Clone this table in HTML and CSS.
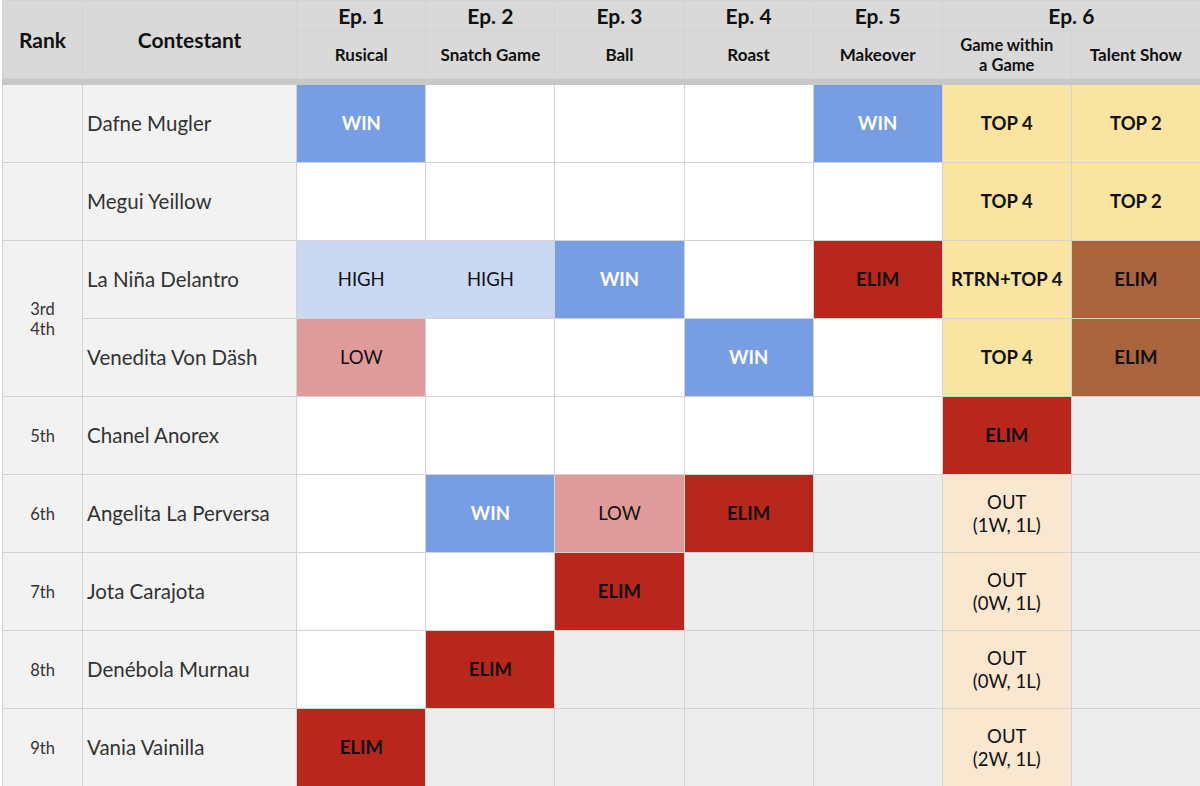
FILE: index.html
```html
<!DOCTYPE html>
<html>
<head>
<meta charset="utf-8">
<link rel="stylesheet" href="styles.css">
</head>
<body>
<table class="prog">
  <colgroup>
    <col class="c-rank"><col class="c-name">
    <col class="c-ep"><col class="c-ep"><col class="c-ep"><col class="c-ep"><col class="c-ep"><col class="c-ep"><col class="c-ep">
  </colgroup>
  <thead>
    <tr class="h1">
      <th rowspan="2" class="big">Rank</th>
      <th rowspan="2" class="big">Contestant</th>
      <th class="big">Ep. 1</th>
      <th class="big">Ep. 2</th>
      <th class="big">Ep. 3</th>
      <th class="big">Ep. 4</th>
      <th class="big">Ep. 5</th>
      <th colspan="2" class="big">Ep. 6</th>
    </tr>
    <tr class="h2">
      <th>Rusical</th>
      <th>Snatch Game</th>
      <th>Ball</th>
      <th>Roast</th>
      <th>Makeover</th>
      <th class="two">Game within<br>a Game</th>
      <th>Talent Show</th>
    </tr>
    <tr class="sep"><td colspan="9"></td></tr>
  </thead>
  <tbody>
    <tr>
      <td class="rank"></td>
      <td class="name">Dafne Mugler</td>
      <td class="win">WIN</td>
      <td class="safe"></td>
      <td class="safe"></td>
      <td class="safe"></td>
      <td class="win">WIN</td>
      <td class="top">TOP 4</td>
      <td class="top">TOP 2</td>
    </tr>
    <tr>
      <td class="rank"></td>
      <td class="name">Megui Yeillow</td>
      <td class="safe"></td>
      <td class="safe"></td>
      <td class="safe"></td>
      <td class="safe"></td>
      <td class="safe"></td>
      <td class="top">TOP 4</td>
      <td class="top">TOP 2</td>
    </tr>
    <tr>
      <td class="rank" rowspan="2">3rd<br>4th</td>
      <td class="name">La Niña Delantro</td>
      <td class="high">HIGH</td>
      <td class="high">HIGH</td>
      <td class="win">WIN</td>
      <td class="safe"></td>
      <td class="elim">ELIM</td>
      <td class="top">RTRN+TOP 4</td>
      <td class="brown">ELIM</td>
    </tr>
    <tr>
      <td class="name">Venedita Von Däsh</td>
      <td class="low">LOW</td>
      <td class="safe"></td>
      <td class="safe"></td>
      <td class="win">WIN</td>
      <td class="safe"></td>
      <td class="top">TOP 4</td>
      <td class="brown">ELIM</td>
    </tr>
    <tr>
      <td class="rank">5th</td>
      <td class="name">Chanel Anorex</td>
      <td class="safe"></td>
      <td class="safe"></td>
      <td class="safe"></td>
      <td class="safe"></td>
      <td class="safe"></td>
      <td class="elim">ELIM</td>
      <td class="gone"></td>
    </tr>
    <tr>
      <td class="rank">6th</td>
      <td class="name">Angelita La Perversa</td>
      <td class="safe"></td>
      <td class="win">WIN</td>
      <td class="low">LOW</td>
      <td class="elim">ELIM</td>
      <td class="gone"></td>
      <td class="out">OUT<br>(1W, 1L)</td>
      <td class="gone"></td>
    </tr>
    <tr>
      <td class="rank">7th</td>
      <td class="name">Jota Carajota</td>
      <td class="safe"></td>
      <td class="safe"></td>
      <td class="elim">ELIM</td>
      <td class="gone"></td>
      <td class="gone"></td>
      <td class="out">OUT<br>(0W, 1L)</td>
      <td class="gone"></td>
    </tr>
    <tr>
      <td class="rank">8th</td>
      <td class="name">Denébola Murnau</td>
      <td class="safe"></td>
      <td class="elim">ELIM</td>
      <td class="gone"></td>
      <td class="gone"></td>
      <td class="gone"></td>
      <td class="out">OUT<br>(0W, 1L)</td>
      <td class="gone"></td>
    </tr>
    <tr>
      <td class="rank">9th</td>
      <td class="name">Vania Vainilla</td>
      <td class="elim">ELIM</td>
      <td class="gone"></td>
      <td class="gone"></td>
      <td class="gone"></td>
      <td class="gone"></td>
      <td class="out">OUT<br>(2W, 1L)</td>
      <td class="gone"></td>
    </tr>
  </tbody>
</table>
</body>
</html>
```
FILE: styles.css
```css
html, body {
  margin: 0;
  padding: 0;
  background: #ffffff;
  overflow: hidden;
}
body {
  font-family: Lato, "Open Sans", "Liberation Sans", sans-serif;
  color: #111;
  padding-left: 2px;
}
.prog {
  border-collapse: collapse;
  table-layout: fixed;
  width: 1199px;
}
.c-rank { width: 80px; }
.c-name { width: 214px; }
.c-ep { width: 129px; }

.prog th, .prog td {
  border: 1px solid #d3d3d3;
  padding: 0 2px;
  text-align: center;
  vertical-align: middle;
}
.prog th {
  background: #d9d9d9;
  font-weight: 700;
  font-size: 17px;
  line-height: 20px;
  color: #111;
}
.prog th.big {
  font-size: 21px;
}
.prog th.two {
  font-size: 16.5px;
}
.h1 { height: 30px; }
.h2 { height: 48px; }
.sep td {
  height: 5px;
  padding: 0;
  background: #c8c8c8;
  border-color: #c8c8c8;
}
.prog tbody tr { height: 78px; }
.prog td {
  font-size: 18.5px;
  line-height: 23px;
}
.prog td.rank {
  background: #f2f2f2;
  color: #333;
  font-size: 16.5px;
  line-height: 20px;
}
.prog td.name {
  background: #f2f2f2;
  color: #333;
  font-size: 20.5px;
  text-align: left;
  padding-left: 4px;
}
.safe { background: #ffffff; }
.gone { background: #ededed; }
.win { background: #779ee2; color: #ffffff; font-weight: 700; }
.high { background: #c9d9f3; color: #111; }
.low { background: #df9b99; color: #111; }
.elim { background: #b8261c; color: #111; font-weight: 700; }
.top { background: #f9e4a1; color: #111; font-weight: 700; }
.brown { background: #a9633d; color: #111; font-weight: 700; }
.out { background: #f9e7d0; color: #111; }
```
